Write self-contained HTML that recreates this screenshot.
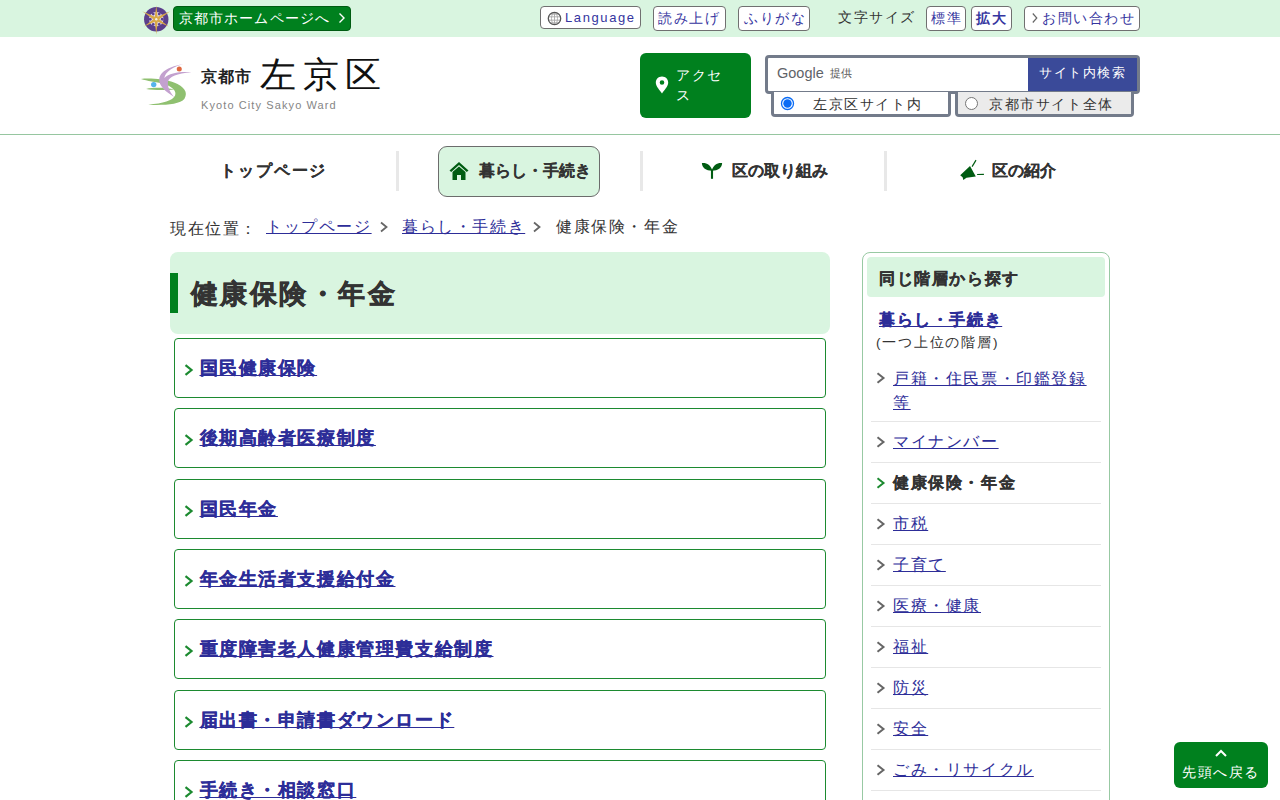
<!DOCTYPE html>
<html lang="ja">
<head>
<meta charset="utf-8">
<title>健康保険・年金 左京区</title>
<style>
*{box-sizing:border-box;margin:0;padding:0}
html,body{width:1280px;height:800px;overflow:hidden;background:#fff}
body{font-family:"Liberation Sans",sans-serif;color:#333;font-size:16px;position:relative;letter-spacing:.1em}
.a{position:absolute;white-space:nowrap}
u{text-decoration:underline;text-underline-offset:auto}
/* top bar */
#topbar{position:absolute;left:0;top:0;width:1280px;height:37px;background:#d9f5e0}
.tbtn{position:absolute;top:6px;height:24.5px;background:#fff;border:1px solid #707070;border-radius:4px}
.tbt{position:absolute;color:#3535a0;font-size:14px;line-height:20px;white-space:nowrap}
#cityhome{position:absolute;left:173px;top:6px;width:178px;height:24.5px;background:#00801e;border:1px solid #005c12;border-radius:4px}
/* header */
#header{position:absolute;left:0;top:37px;width:1280px;height:98px;background:#fff;border-bottom:1px solid #96c6a0}
#access{position:absolute;left:640px;top:53px;width:111px;height:65px;background:#00801e;border-radius:6px}
#search{position:absolute;left:765px;top:54.5px;width:375px;height:39px;border:3px solid #737b8a;border-radius:4px;background:#fff}
#sbtn{position:absolute;left:260px;top:0;width:109px;height:33px;background:#3a4a99}
.radio{position:absolute;top:92px;height:25px;border:3px solid #737b8a;border-top:none;border-radius:0 0 4px 4px}
.rt{position:absolute;font-size:14px;line-height:20px;color:#333;white-space:nowrap}
/* nav */
.nt{position:absolute;font-weight:bold;font-size:16px;line-height:20px;color:#333;white-space:nowrap;letter-spacing:0;-webkit-text-stroke:0.12px #333}
.sep{position:absolute;top:151px;width:3px;height:40px;background:#e8e8e8}
/* main */
#h1box{position:absolute;left:170px;top:252px;width:660px;height:82px;background:#d9f5e0;border-radius:8px}
#h1bar{position:absolute;left:170px;top:273px;width:8px;height:40px;background:#00801e}
.item{position:absolute;left:174px;width:652px;height:60px;border:1.5px solid #1c8a30;border-radius:4px}
.lt{position:absolute;left:24.5px;top:17px;font-weight:bold;font-size:18px;line-height:24px;color:#2d2d98;-webkit-text-stroke:0.3px #2d2d98;white-space:nowrap;text-decoration:underline;text-decoration-thickness:1px}
.chev{position:absolute;left:9px;top:25px}
/* side */
#side{position:absolute;left:862px;top:252px;width:248px;height:620px;border:1px solid #98c9a3;border-radius:8px}
#sidehd{position:absolute;left:867px;top:257px;width:238px;height:40px;background:#d9f5e0;border-radius:4px}
.sep2{position:absolute;left:871px;width:230px;height:1.5px;background:#e6e6e6}
.st{position:absolute;left:893px;font-size:16px;line-height:24px;color:#2d2d98;white-space:nowrap;text-decoration:underline;text-decoration-thickness:1px}
.sc{position:absolute;left:876px}
#totop{position:absolute;left:1174px;top:742px;width:94px;height:46px;background:#00801e;border-radius:6px}
</style>
</head>
<body>
<div id="topbar"></div>
<!-- Kyoto emblem -->
<svg class="a" style="left:141px;top:4px" width="30" height="32" viewBox="0 0 30 32">
 <circle cx="15.25" cy="15.25" r="12.2" fill="#5b3f8c"/>
 <circle cx="15.25" cy="15.25" r="7.2" fill="#e2dcee"/>
 <g fill="#5b3f8c"><circle cx="21.25" cy="15.25" r="1.4"/><circle cx="18.25" cy="20.45" r="1.4"/><circle cx="12.25" cy="20.45" r="1.4"/><circle cx="9.25" cy="15.25" r="1.4"/><circle cx="12.25" cy="10.05" r="1.4"/><circle cx="18.25" cy="10.05" r="1.4"/></g>
 <g fill="#d8a848">
  <polygon points="15.25,1.25 13.5,15.25 15.25,30.50 17,15.25"/>
  <polygon points="1.25,7.25 14.35,16.8 27.75,22.50 16.15,13.7"/>
  <polygon points="29.25,7.25 14.35,13.7 3.00,22.50 16.15,16.8"/>
 </g>
 <circle cx="15.25" cy="15.25" r="1.2" fill="#f4f0e0"/>
</svg>
<div id="cityhome"></div>
<div class="a" style="left:178.5px;top:8px;font-size:14px;line-height:20px;color:#fff;letter-spacing:.085em">京都市ホームページへ</div>
<svg class="a" style="left:338px;top:12px" width="8" height="12" viewBox="0 0 8 12"><path d="M1.5 1.5 L6 6 L1.5 10.5" fill="none" stroke="#fff" stroke-width="1.4"/></svg>

<div class="tbtn" style="left:540px;width:101px;height:23px"></div>
<svg class="a" style="left:546.5px;top:10.5px" width="15" height="15" viewBox="0 0 15 15">
 <g fill="none" stroke="#a8a8a8" stroke-width="0.9"><ellipse cx="7.5" cy="7.5" rx="3" ry="6"/><line x1="1.5" y1="5.8" x2="13.5" y2="5.8"/><line x1="1.5" y1="9.2" x2="13.5" y2="9.2"/><line x1="7.5" y1="1.5" x2="7.5" y2="13.5"/><line x1="3" y1="3.2" x2="12" y2="3.2"/><line x1="3" y1="11.8" x2="12" y2="11.8"/></g>
 <circle cx="7.5" cy="7.5" r="6.2" fill="none" stroke="#555" stroke-width="1.3"/>
</svg>
<div class="a" style="left:565px;top:9px;font-size:13px;line-height:18px;color:#3535a0;letter-spacing:1.6px">Language</div>
<div class="tbtn" style="left:653px;width:73px"></div>
<div class="tbt" style="left:658px;top:8px">読み上げ</div>
<div class="tbtn" style="left:738px;width:72px"></div>
<div class="tbt" style="left:744px;top:8px">ふりがな</div>
<div class="a" style="left:838px;top:7px;font-size:14px;line-height:20px;color:#333">文字サイズ</div>
<div class="tbtn" style="left:926px;width:40px"></div>
<div class="tbt" style="left:931px;top:8px">標準</div>
<div class="tbtn" style="left:971px;width:41px"></div>
<div class="tbt" style="left:976px;top:8px;font-weight:bold">拡大</div>
<div class="tbtn" style="left:1024px;width:116px"></div>
<svg class="a" style="left:1031px;top:12px" width="8" height="12" viewBox="0 0 8 12"><path d="M1.8 1.5 L5.8 6 L1.8 10.5" fill="none" stroke="#666" stroke-width="1.2"/></svg>
<div class="tbt" style="left:1042px;top:8px">お問い合わせ</div>

<div id="header"></div>
<!-- logo -->
<svg class="a" style="left:138px;top:60px" width="58" height="48" viewBox="0 0 967 800">
 <path d="M50,315 C200,300 450,318 600,375 C770,440 840,540 775,645 C700,745 420,755 170,745 C420,722 580,680 618,592 C648,515 570,445 420,392 C300,362 150,350 50,315 Z" fill="#8fc070"/>
 <path d="M135,482 C250,458 450,455 610,492 C450,505 250,505 135,482 Z" fill="#8fc070"/>
 <path d="M760,70 C600,90 380,160 355,310 C340,430 460,530 600,615 C520,520 490,440 500,360 C520,280 650,225 890,205 C700,190 520,220 440,300 C450,200 600,100 760,70 Z" fill="#c3a1cf"/>
 <circle cx="688" cy="150" r="42" fill="#e0673f"/>
 <circle cx="262" cy="410" r="45" fill="#55b4ec"/>
</svg>
<div class="a" style="left:201px;top:66px;font-size:16px;line-height:22px;font-weight:bold;color:#222;letter-spacing:1px">京都市</div>
<div class="a" style="left:260px;top:50px;font-size:36px;line-height:50px;color:#111;letter-spacing:6.5px">左京区</div>
<div class="a" style="left:201px;top:97px;font-size:11px;line-height:16px;color:#858585;letter-spacing:1.1px">Kyoto City Sakyo Ward</div>

<div id="access"></div>
<svg class="a" style="left:655px;top:76px" width="14" height="18" viewBox="0 0 14 18"><path d="M7 0.5 C3.2 0.5 0.8 3.3 0.8 6.6 C0.8 10.5 5 14.6 7 17.5 C9 14.6 13.2 10.5 13.2 6.6 C13.2 3.3 10.8 0.5 7 0.5Z M7 4.2 A2.3 2.3 0 1 1 7 8.8 A2.3 2.3 0 1 1 7 4.2Z" fill="#fff" fill-rule="evenodd"/></svg>
<div class="a" style="left:676px;top:65px;width:60px;white-space:normal;font-size:14px;line-height:20px;color:#fff">アクセス</div>

<div id="search"><div id="sbtn"></div></div>
<div class="a" style="left:777px;top:64px;font-size:14.5px;line-height:18px;color:#5f6368;letter-spacing:0">Google</div>
<div class="a" style="left:830px;top:66px;font-size:10.5px;line-height:14px;color:#555;letter-spacing:0">提供</div>
<div class="a" style="left:1039px;top:63px;font-size:13px;line-height:20px;color:#fff">サイト内検索</div>
<div class="radio" style="left:771px;width:180px;background:#fff"></div>
<svg class="a" style="left:780px;top:96px" width="15" height="15" viewBox="0 0 15 15"><circle cx="7.5" cy="7.5" r="6" fill="#fff" stroke="#0b6cf5" stroke-width="1.3"/><circle cx="7.5" cy="7.5" r="4.2" fill="#0b6cf5"/></svg>
<div class="a rt" style="left:813px;top:94px">左京区サイト内</div>
<div class="radio" style="left:955px;width:179px;background:#ebebeb"></div>
<svg class="a" style="left:964px;top:96px" width="15" height="15" viewBox="0 0 15 15"><circle cx="7.5" cy="7.5" r="6" fill="#fff" stroke="#767676" stroke-width="1"/></svg>
<div class="a rt" style="left:989px;top:94px">京都市サイト全体</div>

<!-- nav -->
<div class="nt" style="left:220px;top:161px;letter-spacing:1.9px">トップページ</div>
<div class="sep" style="left:396px"></div>
<div class="a" style="left:438px;top:146px;width:162px;height:51px;background:#d9f5e0;border:1px solid #6c6c6c;border-radius:9px"></div>
<svg class="a" style="left:448px;top:161px" width="22" height="20" viewBox="0 0 22 20"><path d="M11 1 L1.5 9.5 L3.2 11 L11 4 L18.8 11 L20.5 9.5Z" fill="#005c12"/><path d="M4.5 11 L11 5.5 L17.5 11 L17.5 19 L13 19 L13 14 L9 14 L9 19 L4.5 19Z" fill="#005c12"/></svg>
<div class="nt" style="left:479px;top:161px">暮らし・手続き</div>
<div class="sep" style="left:640px"></div>
<svg class="a" style="left:701px;top:162px" width="22" height="17" viewBox="0 0 22 17"><path d="M0.9,1.1 C5.5,0.5 9.5,3 11,7.8 L11,8.8 C5,8.8 1,6 0.9,1.1Z" fill="#005c12"/><path d="M21.1,1.1 C16.5,0.5 12.5,3 11,7.8 L11,8.8 C17,8.8 21,6 21.1,1.1Z" fill="#005c12"/><rect x="9.95" y="7.5" width="2.1" height="9.3" fill="#005c12"/></svg>
<div class="nt" style="left:732px;top:161px">区の取り組み</div>
<div class="sep" style="left:884px"></div>
<svg class="a" style="left:959px;top:159px" width="26" height="22" viewBox="0 0 26 22"><path d="M1.2,16.3 L11,7 L16.8,17.6 L7.5,18.7 L4.3,21 L3.6,18.2Z" fill="#005c12"/><line x1="13.1" y1="7.6" x2="17" y2="1.1" stroke="#005c12" stroke-width="1.2"/><line x1="18.1" y1="15.5" x2="24.9" y2="15.3" stroke="#005c12" stroke-width="1.2"/></svg>
<div class="nt" style="left:992px;top:161px">区の紹介</div>

<!-- breadcrumb -->
<div class="a" style="left:170px;top:217px;font-size:16px;line-height:24px;color:#333">現在位置：</div>
<div class="a" style="left:266px;top:215px;font-size:16px;line-height:24px;color:#2d2d98;text-decoration:underline;text-decoration-thickness:1px">トップページ</div>
<svg class="a" style="left:379px;top:221px" width="10" height="12" viewBox="0 0 10 12"><path d="M2 1.5 L7.5 6 L2 10.5" fill="none" stroke="#666" stroke-width="1.8"/></svg>
<div class="a" style="left:402px;top:215px;font-size:16px;line-height:24px;color:#2d2d98;text-decoration:underline;text-decoration-thickness:1px">暮らし・手続き</div>
<svg class="a" style="left:532px;top:221px" width="10" height="12" viewBox="0 0 10 12"><path d="M2 1.5 L7.5 6 L2 10.5" fill="none" stroke="#666" stroke-width="1.8"/></svg>
<div class="a" style="left:556px;top:215px;font-size:16px;line-height:24px;color:#333">健康保険・年金</div>

<!-- main -->
<div id="h1box"></div><div id="h1bar"></div>
<div class="a" style="left:191px;top:274px;font-size:27px;line-height:40px;font-weight:bold;color:#333;letter-spacing:2.45px;-webkit-text-stroke:0.6px #333">健康保険・年金</div>

<div class="item" style="top:338px"><svg class="chev" width="10" height="12" viewBox="0 0 10 12"><path d="M1.5 1.2 L7.5 6 L1.5 10.8" fill="none" stroke="#1c8a30" stroke-width="2.2"/></svg><div class="lt">国民健康保険</div></div>
<div class="item" style="top:408px"><svg class="chev" width="10" height="12" viewBox="0 0 10 12"><path d="M1.5 1.2 L7.5 6 L1.5 10.8" fill="none" stroke="#1c8a30" stroke-width="2.2"/></svg><div class="lt">後期高齢者医療制度</div></div>
<div class="item" style="top:479px"><svg class="chev" width="10" height="12" viewBox="0 0 10 12"><path d="M1.5 1.2 L7.5 6 L1.5 10.8" fill="none" stroke="#1c8a30" stroke-width="2.2"/></svg><div class="lt">国民年金</div></div>
<div class="item" style="top:549px"><svg class="chev" width="10" height="12" viewBox="0 0 10 12"><path d="M1.5 1.2 L7.5 6 L1.5 10.8" fill="none" stroke="#1c8a30" stroke-width="2.2"/></svg><div class="lt">年金生活者支援給付金</div></div>
<div class="item" style="top:619px"><svg class="chev" width="10" height="12" viewBox="0 0 10 12"><path d="M1.5 1.2 L7.5 6 L1.5 10.8" fill="none" stroke="#1c8a30" stroke-width="2.2"/></svg><div class="lt">重度障害老人健康管理費支給制度</div></div>
<div class="item" style="top:690px"><svg class="chev" width="10" height="12" viewBox="0 0 10 12"><path d="M1.5 1.2 L7.5 6 L1.5 10.8" fill="none" stroke="#1c8a30" stroke-width="2.2"/></svg><div class="lt">届出書・申請書ダウンロード</div></div>
<div class="item" style="top:760px"><svg class="chev" width="10" height="12" viewBox="0 0 10 12"><path d="M1.5 1.2 L7.5 6 L1.5 10.8" fill="none" stroke="#1c8a30" stroke-width="2.2"/></svg><div class="lt">手続き・相談窓口</div></div>

<!-- side -->
<div id="side"></div>
<div id="sidehd"></div>
<div class="a" style="left:879px;top:266.5px;font-size:16px;line-height:24px;font-weight:bold;color:#333;-webkit-text-stroke:0.3px #333">同じ階層から探す</div>
<div class="a" style="left:879px;top:308px;font-size:16px;line-height:24px;font-weight:bold;color:#2d2d98;-webkit-text-stroke:0.3px #2d2d98;text-decoration:underline;text-decoration-thickness:1px">暮らし・手続き</div>
<div class="a" style="left:876px;top:333px;font-size:13.5px;line-height:20px;color:#333;letter-spacing:1.8px">(一つ上位の階層)</div>

<svg class="sc" style="top:372px" width="10" height="12" viewBox="0 0 10 12"><path d="M1.5 1.2 L7.5 6 L1.5 10.8" fill="none" stroke="#666" stroke-width="2"/></svg>
<div class="st" style="top:366.5px">戸籍・住民票・印鑑登録</div>
<div class="st" style="top:390.5px">等</div>
<div class="sep2" style="top:420.5px"></div>
<svg class="sc" style="top:436px" width="10" height="12" viewBox="0 0 10 12"><path d="M1.5 1.2 L7.5 6 L1.5 10.8" fill="none" stroke="#666" stroke-width="2"/></svg>
<div class="st" style="top:429.5px">マイナンバー</div>
<div class="sep2" style="top:461.5px"></div>
<svg class="sc" style="top:477px" width="10" height="12" viewBox="0 0 10 12"><path d="M1.5 1.2 L7.5 6 L1.5 10.8" fill="none" stroke="#1c8a30" stroke-width="2"/></svg>
<div class="st" style="top:470.5px;color:#333;font-weight:bold;text-decoration:none;-webkit-text-stroke:0.3px #333">健康保険・年金</div>
<div class="sep2" style="top:502.5px"></div>
<svg class="sc" style="top:518px" width="10" height="12" viewBox="0 0 10 12"><path d="M1.5 1.2 L7.5 6 L1.5 10.8" fill="none" stroke="#666" stroke-width="2"/></svg>
<div class="st" style="top:511.5px">市税</div>
<div class="sep2" style="top:543.5px"></div>
<svg class="sc" style="top:559px" width="10" height="12" viewBox="0 0 10 12"><path d="M1.5 1.2 L7.5 6 L1.5 10.8" fill="none" stroke="#666" stroke-width="2"/></svg>
<div class="st" style="top:552.5px">子育て</div>
<div class="sep2" style="top:584.5px"></div>
<svg class="sc" style="top:600px" width="10" height="12" viewBox="0 0 10 12"><path d="M1.5 1.2 L7.5 6 L1.5 10.8" fill="none" stroke="#666" stroke-width="2"/></svg>
<div class="st" style="top:593.5px">医療・健康</div>
<div class="sep2" style="top:625.5px"></div>
<svg class="sc" style="top:641px" width="10" height="12" viewBox="0 0 10 12"><path d="M1.5 1.2 L7.5 6 L1.5 10.8" fill="none" stroke="#666" stroke-width="2"/></svg>
<div class="st" style="top:634.5px">福祉</div>
<div class="sep2" style="top:666.5px"></div>
<svg class="sc" style="top:682px" width="10" height="12" viewBox="0 0 10 12"><path d="M1.5 1.2 L7.5 6 L1.5 10.8" fill="none" stroke="#666" stroke-width="2"/></svg>
<div class="st" style="top:675.5px">防災</div>
<div class="sep2" style="top:707.5px"></div>
<svg class="sc" style="top:723px" width="10" height="12" viewBox="0 0 10 12"><path d="M1.5 1.2 L7.5 6 L1.5 10.8" fill="none" stroke="#666" stroke-width="2"/></svg>
<div class="st" style="top:716.5px">安全</div>
<div class="sep2" style="top:748.5px"></div>
<svg class="sc" style="top:764px" width="10" height="12" viewBox="0 0 10 12"><path d="M1.5 1.2 L7.5 6 L1.5 10.8" fill="none" stroke="#666" stroke-width="2"/></svg>
<div class="st" style="top:757.5px">ごみ・リサイクル</div>
<div class="sep2" style="top:789.5px"></div>

<div id="totop"></div>
<svg class="a" style="left:1214px;top:748px" width="14" height="10" viewBox="0 0 14 10"><path d="M2 8 L7 3 L12 8" fill="none" stroke="#fff" stroke-width="2"/></svg>
<div class="a" style="left:1182px;top:762px;font-size:14px;line-height:20px;color:#fff">先頭へ戻る</div>
</body>
</html>
